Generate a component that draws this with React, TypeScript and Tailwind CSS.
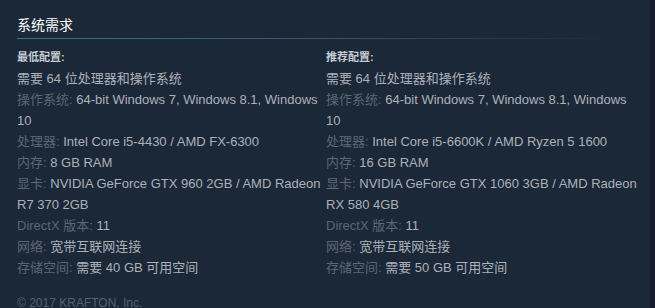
const minimum: [string, string][] = [
  ["操作系统:", "64-bit Windows 7, Windows 8.1, Windows 10"],
  ["处理器:", "Intel Core i5-4430 / AMD FX-6300"],
  ["内存:", "8 GB RAM"],
  ["显卡:", "NVIDIA GeForce GTX 960 2GB / AMD Radeon R7 370 2GB"],
  ["DirectX 版本:", "11"],
  ["网络:", "宽带互联网连接"],
  ["存储空间:", "需要 40 GB 可用空间"],
];

const recommended: [string, string][] = [
  ["操作系统:", "64-bit Windows 7, Windows 8.1, Windows 10"],
  ["处理器:", "Intel Core i5-6600K / AMD Ryzen 5 1600"],
  ["内存:", "16 GB RAM"],
  ["显卡:", "NVIDIA GeForce GTX 1060 3GB / AMD Radeon RX 580 4GB"],
  ["DirectX 版本:", "11"],
  ["网络:", "宽带互联网连接"],
  ["存储空间:", "需要 50 GB 可用空间"],
];

function ReqColumn({ title, rows }: { title: string; rows: [string, string][] }) {
  return (
    <div>
      <div className="text-[11px] leading-[21px] font-bold text-[#c6ccd2]">{title}</div>
      <ul className="text-[13px] leading-[21px] text-[#acb2b8]">
        <li>需要 64 位处理器和操作系统</li>
        {rows.map(([label, value]) => (
          <li key={label}>
            <span className="text-[#5c6771]">{label}</span> {value}
          </li>
        ))}
      </ul>
    </div>
  );
}

export default function App() {
  return (
    <div
      className="flex h-[308px] w-[655px] overflow-hidden bg-[#1b2838]"
      style={{ fontFamily: '"Liberation Sans", Arial, "Noto Sans CJK SC", sans-serif' }}
    >
      <div className="flex-1 pl-[17px]">
        <div className="pt-[15px]">
          <h2 className="text-[14px] leading-[20px] text-white">系统需求</h2>
          <div className="mt-[3px] h-px w-[600px] bg-gradient-to-r from-[#3b6e8c] via-[#2f5a6e] to-transparent" />
        </div>
        <div className="mt-[8px] grid grid-cols-[309px_316px]">
          <ReqColumn title="最低配置:" rows={minimum} />
          <ReqColumn title="推荐配置:" rows={recommended} />
        </div>
        <div className="mt-[17px] text-[12px] leading-[16px] text-[#56616b]">© 2017 KRAFTON, Inc.</div>
      </div>
      <div className="w-[5px] bg-[#151e2a]" />
    </div>
  );
}
